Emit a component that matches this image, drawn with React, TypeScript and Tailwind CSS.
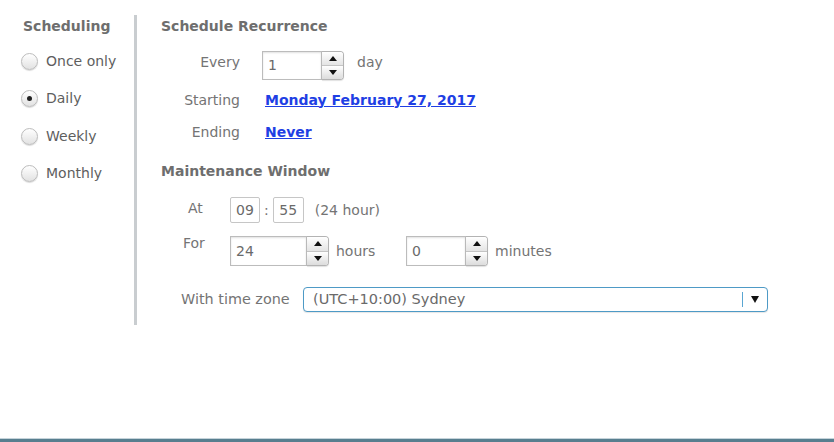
function Radio({ checked }: { checked?: boolean }) {
  return (
    <span className="flex h-[17px] w-[17px] items-center justify-center rounded-full border border-[#bcbcbc] bg-gradient-to-b from-white to-[#e2e2e2] shadow-[0_1px_1px_rgba(0,0,0,0.15)]">
      {checked && <span className="h-[5px] w-[5px] rounded-full bg-[#222]" />}
    </span>
  );
}

function Spinner() {
  return (
    <div className="flex h-full w-[22px] flex-col overflow-hidden rounded-r-[4px] border border-l-0 border-[#b3b3b3] shadow-[0_1px_1px_rgba(0,0,0,0.12)]">
      <div className="flex flex-1 items-center justify-center border-b border-[#c4c4c4] bg-gradient-to-b from-white to-[#e4e4e4]">
        <span className="h-0 w-0 border-x-[4px] border-b-[5px] border-x-transparent border-b-[#111]" />
      </div>
      <div className="flex flex-1 items-center justify-center bg-gradient-to-b from-white to-[#dcdcdc]">
        <span className="h-0 w-0 border-x-[4px] border-t-[5px] border-x-transparent border-t-[#111]" />
      </div>
    </div>
  );
}

function NumberInput({ value, width, height }: { value: string; width: string; height: string }) {
  return (
    <div className={`flex ${height}`}>
      <div className={`${width} flex items-center border border-[#bcbcbc] bg-white px-[5px] text-[14px] text-[#6a6a6a] shadow-[inset_0_1px_2px_rgba(0,0,0,0.12)]`}>
        {value}
      </div>
      <Spinner />
    </div>
  );
}

export default function App() {
  return (
    <div className="flex h-[442px] w-[834px] flex-col bg-white font-['DejaVu_Sans',sans-serif] text-[14px]">
      <div className="flex flex-1">
        {/* Scheduling */}
        <div className="w-[134px] pl-[21px] pt-[16px]">
          <h2 className="ml-[2px] h-5 font-bold leading-5 text-[#6e6e6e]">Scheduling</h2>
          <ul className="mt-[15px] flex flex-col gap-[17.5px] text-[#5e5e5e]">
            <li className="flex h-5 items-center gap-[8px]"><Radio /><span>Once only</span></li>
            <li className="flex h-5 items-center gap-[8px]"><Radio checked /><span>Daily</span></li>
            <li className="flex h-5 items-center gap-[8px]"><Radio /><span>Weekly</span></li>
            <li className="flex h-5 items-center gap-[8px]"><Radio /><span>Monthly</span></li>
          </ul>
        </div>

        <div className="mt-[15px] h-[310px] w-[3px] bg-[#c9cdd0]" />

        {/* Recurrence + window */}
        <div className="flex-1 pl-[24px] pt-[16px] text-[#747474]">
          <h2 className="h-5 font-bold leading-5 text-[#6e6e6e]">Schedule Recurrence</h2>

          <div className="mt-[15px] flex h-[29px] items-center">
            <span className="-mt-[6px] w-[79px] text-right">Every</span>
            <div className="ml-[22px]"><NumberInput value="1" width="w-[60px]" height="h-[29px]" /></div>
            <span className="-mt-[6px] ml-[13px]">day</span>
          </div>

          <div className="mt-[10px] flex h-5 items-center">
            <span className="w-[79px] text-right">Starting</span>
            <a href="#" className="ml-[25px] font-bold text-[#1f3fe4] underline">Monday February 27, 2017</a>
          </div>

          <div className="mt-[12px] flex h-5 items-center">
            <span className="w-[79px] text-right">Ending</span>
            <a href="#" className="ml-[25px] font-bold text-[#1f3fe4] underline">Never</a>
          </div>

          <h2 className="mt-[19px] h-5 font-bold leading-5 text-[#6e6e6e]">Maintenance Window</h2>

          <div className="mt-[16px] flex h-[26px] items-center">
            <span className="-mt-[3px] ml-[27px] w-[42px]">At</span>
            <div className="flex h-[26px] w-[30px] items-center justify-center rounded-[2px] border border-[#c6c6c6] text-[14px] text-[#6a6a6a]">09</div>
            <span className="mx-[4px]">:</span>
            <div className="flex h-[26px] w-[31px] items-center justify-center rounded-[2px] border border-[#c6c6c6] text-[14px] text-[#6a6a6a]">55</div>
            <span className="ml-[11px]">(24 hour)</span>
          </div>

          <div className="mt-[13px] flex h-[30px] items-center">
            <span className="-mt-[15px] ml-[22px] w-[47px]">For</span>
            <NumberInput value="24" width="w-[77px]" height="h-[30px]" />
            <span className="ml-[7px] w-[70px]">hours</span>
            <NumberInput value="0" width="w-[60px]" height="h-[30px]" />
            <span className="ml-[7px]">minutes</span>
          </div>

          <div className="mt-[21px] flex h-[25px] items-center">
            <span className="ml-[20px] w-[122px] text-[14.4px]">With time zone</span>
            <div className="flex h-[25px] w-[465px] items-center rounded-[4px] border border-[#4e9ac6] bg-white pl-[9px] pr-[8px] text-[14.5px] text-[#6a6a6a] shadow-[0_1px_1px_rgba(0,0,0,0.1)]">
              <span className="flex-1">(UTC+10:00) Sydney</span>
              <span className="h-[15px] w-[1px] bg-[#5aa6d2]" />
              <span className="ml-[8px] h-0 w-0 border-x-[4.5px] border-t-[7px] border-x-transparent border-t-[#111]" />
            </div>
          </div>
        </div>
      </div>

      <div className="h-[1px] bg-[#c5d3da]" />
      <div className="h-[3px] bg-[#587e8f]" />
    </div>
  );
}
